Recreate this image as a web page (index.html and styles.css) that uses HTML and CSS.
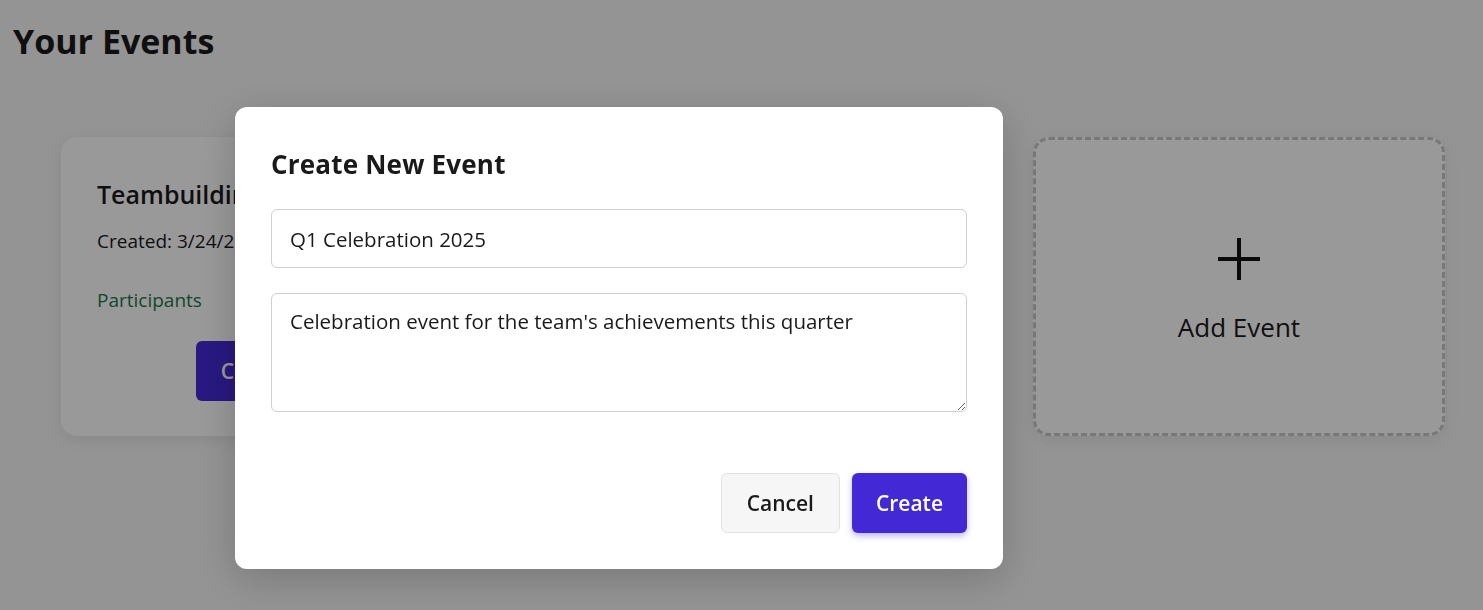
FILE: index.html
```html
<!DOCTYPE html>
<html lang="en">
<head>
    <meta charset="UTF-8">
    <meta name="viewport" content="width=device-width, initial-scale=1.0">
    <title>Your Events</title>
    <link rel="stylesheet" href="styles.css">
</head>
<body>
    <div class="page">
        <h1>Your Events</h1>

        <div class="event-grid">
            <div class="event-card">
                <h2>Teambuilding Day</h2>
                <p class="created">Created: 3/24/2025</p>
                <a href="#" class="participants">Participants</a>
                <div class="card-actions">
                    <button class="btn btn-primary">Continue</button>
                </div>
            </div>

            <div class="event-card">
                <h2>Summer Picnic</h2>
                <p class="created">Created: 3/20/2025</p>
                <a href="#" class="participants">Participants</a>
                <div class="card-actions">
                    <button class="btn btn-primary">Continue</button>
                </div>
            </div>

            <div class="add-card">
                <span class="plus"></span>
                <span class="add-label">Add Event</span>
            </div>
        </div>
    </div>

    <div class="overlay">
        <div class="modal">
            <h2>Create New Event</h2>
            <input class="field" type="text" value="Q1 Celebration 2025">
            <textarea class="field field-area">Celebration event for the team's achievements this quarter</textarea>
            <div class="modal-actions">
                <button class="btn btn-light">Cancel</button>
                <button class="btn btn-primary btn-raised">Create</button>
            </div>
        </div>
    </div>
</body>
</html>
```

FILE: styles.css
```css
* {
    margin: 0;
    padding: 0;
    box-sizing: border-box;
}

body {
    font-family: 'Open Sans', 'Noto Sans', sans-serif;
    background: #f7f7f7;
    color: #1a1a1a;
    min-height: 100vh;
    overflow: hidden;
}

.page {
    padding: 21px 13px;
}

h1 {
    font-size: 34px;
    font-weight: 700;
    line-height: 1.2;
}

.event-grid {
    display: grid;
    grid-template-columns: repeat(3, 412px);
    gap: 74px;
    margin-top: 75px;
    padding-left: 48px;
}

.event-card {
    background: #ffffff;
    border-radius: 16px;
    height: 299px;
    padding: 42px 36px 36px;
    box-shadow: 0 4px 16px rgba(0, 0, 0, 0.08);
    overflow: hidden;
}

.event-card h2 {
    font-size: 25px;
    font-weight: 600;
    line-height: 1.2;
    white-space: nowrap;
    margin-bottom: 19px;
}

.created {
    font-size: 19px;
    margin-bottom: 33px;
}

.participants {
    color: #187a4c;
    text-decoration: none;
    font-size: 19px;
}

.card-actions {
    display: flex;
    justify-content: center;
    margin-top: 28px;
}

.card-actions .btn {
    padding: 0 24px;
}

.add-card {
    border: 3px dashed #c8c8c8;
    border-radius: 16px;
    height: 299px;
    display: flex;
    flex-direction: column;
    align-items: center;
    justify-content: center;
    gap: 32px;
    padding-top: 8px;
    background: #ffffff;
    box-shadow: 0 4px 16px rgba(0, 0, 0, 0.08);
}

.plus {
    width: 42px;
    height: 42px;
    position: relative;
}

.plus::before,
.plus::after {
    content: '';
    position: absolute;
    background: #111111;
}

.plus::before {
    left: 0;
    top: 19px;
    width: 42px;
    height: 4px;
}

.plus::after {
    left: 19px;
    top: 0;
    width: 4px;
    height: 42px;
}

.add-label {
    font-size: 26px;
    font-weight: 500;
    line-height: 1.2;
}

.btn {
    font-family: inherit;
    font-size: 21px;
    font-weight: 600;
    height: 60px;
    padding: 0 25px;
    border-radius: 6px;
    border: 1px solid transparent;
    cursor: pointer;
}

.btn-primary {
    background: #4329d6;
    color: #ffffff;
}

.btn-light {
    background: #f6f6f6;
    border-color: #e2e2e2;
    color: #1a1a1a;
}

.btn-raised {
    padding: 0 23px;
    box-shadow: 0 3px 6px rgba(67, 41, 214, 0.35);
}

.overlay {
    position: fixed;
    inset: 0;
    background: rgba(0, 0, 0, 0.4);
}

.modal {
    position: absolute;
    left: 235px;
    top: 107px;
    width: 768px;
    background: #ffffff;
    border-radius: 12px;
    padding: 36px;
    box-shadow: 0 10px 40px rgba(0, 0, 0, 0.2);
}

.modal h2 {
    font-size: 26px;
    font-weight: 700;
    line-height: 1.2;
    letter-spacing: 0.2px;
    padding-top: 6px;
    margin-bottom: 29px;
}

.field {
    display: block;
    width: 100%;
    font-family: inherit;
    font-size: 20.5px;
    color: #1a1a1a;
    border: 1px solid #cfcfcf;
    border-radius: 6px;
    padding: 14px 18px;
    height: 59px;
    background: #ffffff;
}

.field-area {
    height: 119px;
    margin-top: 25px;
    resize: vertical;
    line-height: 1.3;
}

.modal-actions {
    display: flex;
    justify-content: flex-end;
    gap: 12px;
    margin-top: 61px;
}
```
